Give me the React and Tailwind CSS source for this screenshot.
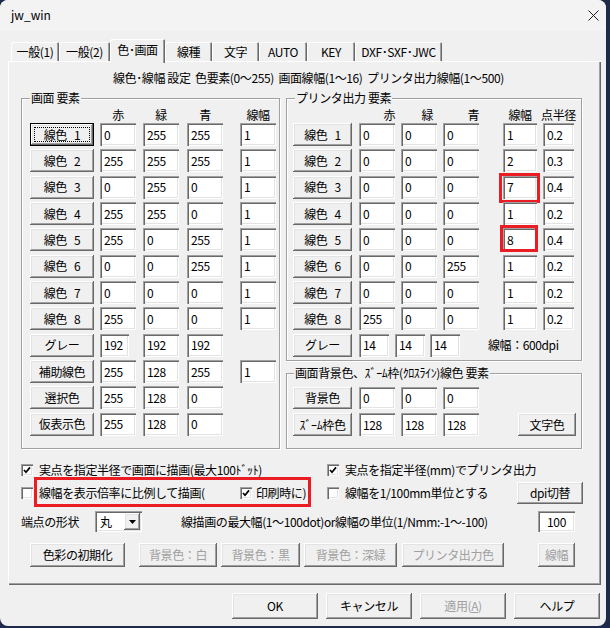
import React from "react";

const raised =
  "bg-[#f0f0f0] shadow-[inset_-1px_-1px_0_#696969,inset_1px_1px_0_#ffffff,inset_-2px_-2px_0_#a0a0a0,inset_2px_2px_0_#e3e3e3]";
const sunken =
  "bg-white shadow-[inset_1px_1px_0_#a0a0a0,inset_2px_2px_0_#696969,inset_-1px_-1px_0_#ffffff,inset_-2px_-2px_0_#e3e3e3]";

function Btn({ children, className = "", disabled = false, isDefault = false }) {
  if (isDefault) {
    return (
      <div className={`flex border border-black bg-[#f0f0f0] ${className}`}>
        <div className={`flex flex-1 p-[3px] ${raised}`}>
          <div className="flex flex-1 items-center justify-center border border-dotted border-black">
            {children}
          </div>
        </div>
      </div>
    );
  }
  return (
    <div
      className={`flex items-center justify-center whitespace-nowrap ${raised} ${
        disabled ? "text-[#a0a0a0]" : ""
      } ${className}`}
    >
      {children}
    </div>
  );
}

function Field({ value, className = "" }) {
  return (
    <div className={`flex h-[23px] items-center pl-[4px] ${sunken} ${className}`}>
      {value}
    </div>
  );
}

function Group({ label, className = "", labelClass = "left-[8px]", children }) {
  return (
    <div
      className={`relative border border-[#a0a0a0] shadow-[1px_1px_0_#ffffff,inset_1px_1px_0_#ffffff] ${className}`}
    >
      <span
        className={`absolute -top-[9px] whitespace-nowrap bg-[#f0f0f0] px-[1px] leading-[16px] ${labelClass}`}
      >
        {label}
      </span>
      {children}
    </div>
  );
}

function Check({ checked }) {
  return (
    <div className={`flex h-[12px] w-[12px] shrink-0 items-center justify-center ${sunken}`}>
      {checked && (
        <svg width="8" height="8" viewBox="0 0 8 8">
          <path d="M1 4 L3 6.3 L7 1.4" fill="none" stroke="#000" strokeWidth="1.7" />
        </svg>
      )}
    </div>
  );
}

const lineLabel = (n) => (
  <>
    線色<span className="ml-[7px]">{n}</span>
  </>
);

const screenRows = [
  ["0", "255", "255", "1"],
  ["255", "255", "255", "1"],
  ["0", "255", "0", "1"],
  ["255", "255", "0", "1"],
  ["255", "0", "255", "1"],
  ["0", "0", "255", "1"],
  ["0", "0", "0", "1"],
  ["255", "0", "0", "1"],
];

const printRows = [
  ["0", "0", "0", "1", "0.2"],
  ["0", "0", "0", "2", "0.3"],
  ["0", "0", "0", "7", "0.4"],
  ["0", "0", "0", "1", "0.2"],
  ["0", "0", "0", "8", "0.4"],
  ["0", "0", "255", "1", "0.2"],
  ["0", "0", "0", "1", "0.2"],
  ["255", "0", "0", "1", "0.2"],
];

const extraRows = [
  ["補助線色", "255", "128", "255", "1"],
  ["選択色", "255", "128", "0", null],
  ["仮表示色", "255", "128", "0", null],
];

const tabs = [
  ["一般(1)", 48],
  ["一般(2)", 51],
  ["色･画面", 55, true],
  ["線種", 47],
  ["文字", 47],
  ["AUTO", 48],
  ["KEY", 48],
  ["DXF･SXF･JWC", 87],
];

export default function App() {
  return (
    <div className="h-[628px] w-[610px] overflow-hidden bg-[#1e2a4a] font-['Noto_Sans_CJK_JP','Noto_Sans',sans-serif] text-[12px] leading-[14px] tracking-[-0.4px] text-black">
      <div className="flex h-[626px] w-[606px] flex-col overflow-hidden rounded-[8px] bg-[#f0f0f0]">
        {/* title bar */}
        <div className="flex h-[31px] items-center justify-between bg-[#f3f3f3] pl-[11px] pr-[7px]">
          <span className="pb-[1px] tracking-normal">jw_win</span>
          <svg width="11" height="11" viewBox="0 0 11 11" className="mb-[1px]">
            <path d="M0.5 0.5 L10.5 10.5 M10.5 0.5 L0.5 10.5" stroke="#1a1a1a" strokeWidth="1" />
          </svg>
        </div>

        {/* tabs */}
        <div className="relative z-10 mt-[8px] flex h-[22px] items-end pl-[11px]">
          {tabs.map(([t, w, sel]) =>
            sel ? (
              <div
                key={t}
                style={{ width: w }}
                className="-mb-[2px] flex h-[24px] items-center justify-center rounded-t-[2px] bg-[#f0f0f0] pb-[3px] shadow-[inset_1px_1px_0_#ffffff,inset_-1px_0_0_#696969,inset_-2px_0_0_#a0a0a0]"
              >
                {t}
              </div>
            ) : (
              <div
                key={t}
                style={{ width: w }}
                className="flex h-[19px] items-center justify-center whitespace-nowrap rounded-t-[2px] bg-[#f0f0f0] shadow-[inset_1px_1px_0_#ffffff,inset_-1px_0_0_#696969,inset_-2px_0_0_#a0a0a0]"
              >
                {t}
              </div>
            )
          )}
        </div>

        {/* panel */}
        <div className="ml-[8px] flex h-[524px] w-[593px] flex-col bg-[#f0f0f0] shadow-[inset_1px_1px_0_#ffffff,inset_-1px_-1px_0_#696969,inset_-2px_-2px_0_#a0a0a0]">
          <div className="whitespace-nowrap pl-[105px] pt-[10px]">
            線色･線幅 設定&nbsp; 色要素(0〜255)&nbsp; 画面線幅(1〜16)&nbsp; プリンタ出力線幅(1〜500)
          </div>

          <div className="mt-[13px] flex pl-[13px]">
            {/* screen group */}
            <Group label="画面 要素" className="h-[351px] w-[259px] pl-[8px] pt-[9px]">
              <div className="mb-[1px] flex h-[14px]">
                <div className="w-[64px]" />
                <div className="ml-[6px] w-[36px] text-center">赤</div>
                <div className="ml-[7px] w-[36px] text-center">緑</div>
                <div className="ml-[8px] w-[36px] text-center">青</div>
                <div className="ml-[17px] w-[36px] text-center">線幅</div>
              </div>
              <div className="flex flex-col gap-[3.35px]">
                {screenRows.map((r, i) => (
                  <div key={i} className="flex h-[23px]">
                    <Btn isDefault={i === 0} className="w-[64px]">
                      {lineLabel(i + 1)}
                    </Btn>
                    <Field value={r[0]} className="ml-[6px] w-[36px]" />
                    <Field value={r[1]} className="ml-[7px] w-[36px]" />
                    <Field value={r[2]} className="ml-[8px] w-[36px]" />
                    <Field value={r[3]} className="ml-[17px] w-[36px]" />
                  </div>
                ))}
                <div className="flex h-[23px]">
                  <Btn className="w-[64px]">グレー</Btn>
                  <Field value="192" className="ml-[6px] w-[29px]" />
                  <Field value="192" className="ml-[14px] w-[36px]" />
                  <Field value="192" className="ml-[8px] w-[36px]" />
                </div>
                {extraRows.map((r) => (
                  <div key={r[0]} className="flex h-[23px]">
                    <Btn className="w-[64px]">{r[0]}</Btn>
                    <Field value={r[1]} className="ml-[6px] w-[36px]" />
                    <Field value={r[2]} className="ml-[7px] w-[36px]" />
                    <Field value={r[3]} className="ml-[8px] w-[36px]" />
                    {r[4] && <Field value={r[4]} className="ml-[17px] w-[36px]" />}
                  </div>
                ))}
              </div>
            </Group>

            <div className="ml-[6px] flex w-[296px] flex-col">
              {/* printer group */}
              <Group label="プリンタ出力 要素" className="h-[263px] w-[296px] pl-[6px] pt-[9px]">
                <div className="mb-[1px] flex h-[14px]">
                  <div className="w-[59px]" />
                  <div className="ml-[7px] w-[36px] text-right">赤</div>
                  <div className="ml-[6px] w-[36px] pr-[4px] text-right">緑</div>
                  <div className="ml-[6px] w-[36px] text-right">青</div>
                  <div className="ml-[24px] flex w-[34px] justify-center whitespace-nowrap">線幅</div>
                  <div className="ml-[6px] flex w-[31px] justify-center whitespace-nowrap">点半径</div>
                </div>
                <div className="flex flex-col gap-[3.35px]">
                  {printRows.map((r, i) => (
                    <div key={i} className="flex h-[23px]">
                      <Btn className="w-[59px]">{lineLabel(i + 1)}</Btn>
                      <Field value={r[0]} className="ml-[7px] w-[36px]" />
                      <Field value={r[1]} className="ml-[6px] w-[36px]" />
                      <Field value={r[2]} className="ml-[6px] w-[36px]" />
                      <div className="relative ml-[24px] w-[34px]">
                        <Field value={r[3]} className="w-[34px]" />
                        {i === 2 && (
                          <span className="absolute -left-[4px] -top-[3px] h-[30px] w-[41px] border-[3px] border-[#ec1c24]" />
                        )}
                        {i === 4 && (
                          <span className="absolute -left-[3px] -top-[3px] h-[27px] w-[38px] border-[3px] border-[#ec1c24]" />
                        )}
                      </div>
                      <Field value={r[4]} className="ml-[6px] w-[31px]" />
                    </div>
                  ))}
                  <div className="flex h-[23px]">
                    <Btn className="w-[59px]">グレー</Btn>
                    <Field value="14" className="ml-[7px] w-[30px]" />
                    <Field value="14" className="ml-[6px] w-[30px]" />
                    <Field value="14" className="ml-[5px] w-[30px]" />
                    <div className="ml-[28px] flex items-center whitespace-nowrap">線幅：600dpi</div>
                  </div>
                </div>
              </Group>

              {/* background group */}
              <Group
                label="画面背景色、ｽﾞｰﾑ枠(ｸﾛｽﾗｲﾝ)線色 要素"
                labelClass="left-[7px]"
                className="mt-[12px] h-[76px] w-[296px] pl-[6px] pt-[13px]"
              >
                <div className="flex h-[22px]">
                  <Btn className="w-[59px]">背景色</Btn>
                  <Field value="0" className="ml-[7px] !h-[22px] w-[36px]" />
                  <Field value="0" className="ml-[6px] !h-[22px] w-[36px]" />
                  <Field value="0" className="ml-[6px] !h-[22px] w-[36px]" />
                </div>
                <div className="mt-[4px] flex h-[23px]">
                  <Btn className="w-[59px]">ｽﾞｰﾑ枠色</Btn>
                  <Field value="128" className="ml-[7px] w-[36px]" />
                  <Field value="128" className="ml-[6px] w-[36px]" />
                  <Field value="128" className="ml-[6px] w-[36px]" />
                  <Btn className="ml-[39px] w-[58px]">文字色</Btn>
                </div>
              </Group>
            </div>
          </div>

          {/* options */}
          <div className="flex flex-col pl-[13px]">
            <div className="mt-[13px] flex h-[16px] items-center">
              <div className="flex w-[306px] items-center">
                <Check checked />
                <span className="ml-[6px] whitespace-nowrap">実点を指定半径で画面に描画(最大100ﾄﾞｯﾄ)</span>
              </div>
              <Check checked />
              <span className="ml-[6px] whitespace-nowrap">実点を指定半径(mm)でプリンタ出力</span>
            </div>

            <div className="relative mt-[4px] flex h-[22px] items-center">
              <div className="flex w-[306px] items-center">
                <Check />
                <span className="ml-[6px] w-[201px] whitespace-nowrap">線幅を表示倍率に比例して描画(</span>
                <Check checked />
                <span className="ml-[4px] whitespace-nowrap">印刷時に)</span>
              </div>
              <div className="flex w-[190px] items-center">
                <Check />
                <span className="ml-[6px] whitespace-nowrap">線幅を1/100mm単位とする</span>
              </div>
              <Btn className="h-[22px] w-[66px]">dpi切替</Btn>
              <span className="absolute left-[13px] -top-[5px] h-[30px] w-[277px] border-[3px] border-[#ec1c24]" />
            </div>

            <div className="mt-[7px] flex h-[21px] items-center">
              <div className="w-[74px] whitespace-nowrap">端点の形状</div>
              <div className={`flex h-[21px] w-[47px] items-center justify-between p-[2px] ${sunken}`}>
                <span className="pl-[3px]">丸</span>
                <div className={`flex h-[17px] w-[16px] items-center justify-center ${raised}`}>
                  <svg width="7" height="4" viewBox="0 0 7 4">
                    <path d="M0 0 H7 L3.5 4 Z" fill="#000" />
                  </svg>
                </div>
              </div>
              <div className="ml-[39px] w-[357px] whitespace-nowrap">
                線描画の最大幅(1〜100dot)or線幅の単位(1/Nmm:-1〜-100)
              </div>
              <Field value="100" className="!h-[21px] w-[37px] justify-center !pl-0" />
            </div>

            <div className="mt-[11px] flex h-[24px] pl-[9px]">
              <Btn className="w-[95px]">色彩の初期化</Btn>
              <Btn disabled className="ml-[14px] w-[78px]">背景色：白</Btn>
              <Btn disabled className="ml-[4px] w-[79px]">背景色：黒</Btn>
              <Btn disabled className="ml-[4px] w-[93px]">背景色：深緑</Btn>
              <Btn disabled className="ml-[5px] w-[102px]">プリンタ出力色</Btn>
              <Btn disabled className="ml-[34px] w-[37px]">線幅</Btn>
            </div>
          </div>
        </div>

        {/* dialog buttons */}
        <div className="mt-[8px] flex h-[26px] gap-[8px] pl-[232px]">
          <Btn className="w-[86px]">OK</Btn>
          <Btn className="w-[86px]">キャンセル</Btn>
          <Btn disabled className="w-[86px]">
            適用(<span className="underline">A</span>)
          </Btn>
          <Btn className="w-[86px]">ヘルプ</Btn>
        </div>
      </div>
    </div>
  );
}
